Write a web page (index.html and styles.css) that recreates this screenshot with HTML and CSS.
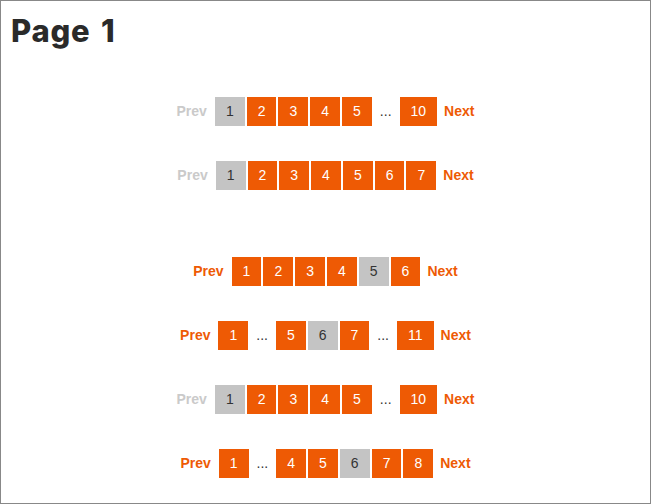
FILE: index.html
```html
<!DOCTYPE html>
<html>
<head>
<meta charset="utf-8">
<link rel="stylesheet" href="styles.css">
</head>
<body>
<div class="page">
  <h1 class="title">Page 1</h1>
  <div class="group group-first">
    <nav class="pager">
      <span class="nav nav-off">Prev</span>
      <span class="box box-cur">1</span>
      <span class="box">2</span>
      <span class="box">3</span>
      <span class="box">4</span>
      <span class="box">5</span>
      <span class="dots">...</span>
      <span class="box">10</span>
      <span class="nav">Next</span>
    </nav>
    <nav class="pager">
      <span class="nav nav-off">Prev</span>
      <span class="box box-cur">1</span>
      <span class="box">2</span>
      <span class="box">3</span>
      <span class="box">4</span>
      <span class="box">5</span>
      <span class="box">6</span>
      <span class="box">7</span>
      <span class="nav">Next</span>
    </nav>
  </div>
  <div class="group group-second">
    <nav class="pager">
      <span class="nav">Prev</span>
      <span class="box">1</span>
      <span class="box">2</span>
      <span class="box">3</span>
      <span class="box">4</span>
      <span class="box box-cur">5</span>
      <span class="box">6</span>
      <span class="nav">Next</span>
    </nav>
    <nav class="pager">
      <span class="nav">Prev</span>
      <span class="box">1</span>
      <span class="dots">...</span>
      <span class="box">5</span>
      <span class="box box-cur">6</span>
      <span class="box">7</span>
      <span class="dots">...</span>
      <span class="box">11</span>
      <span class="nav">Next</span>
    </nav>
    <nav class="pager">
      <span class="nav nav-off">Prev</span>
      <span class="box box-cur">1</span>
      <span class="box">2</span>
      <span class="box">3</span>
      <span class="box">4</span>
      <span class="box">5</span>
      <span class="dots">...</span>
      <span class="box">10</span>
      <span class="nav">Next</span>
    </nav>
    <nav class="pager">
      <span class="nav">Prev</span>
      <span class="box">1</span>
      <span class="dots">...</span>
      <span class="box">4</span>
      <span class="box">5</span>
      <span class="box box-cur">6</span>
      <span class="box">7</span>
      <span class="box">8</span>
      <span class="nav">Next</span>
    </nav>
  </div>
</div>
</body>
</html>
```

FILE: styles.css
```css
* { box-sizing: border-box; }
html, body { margin: 0; padding: 0; background: #fff; }
.page {
  width: 651px;
  height: 504px;
  border: 1px solid #888;
  font-family: "Liberation Sans", Arial, sans-serif;
  font-size: 14px;
}
.title {
  margin: 0;
  padding: 10px 0 0 10px;
  height: 50px;
  font-family: Inter, "DejaVu Sans", sans-serif;
  font-weight: 800;
  font-size: 31px;
  line-height: 40px;
  letter-spacing: 0.8px;
  word-spacing: 3px;
  color: #2a2a2a;
}
.group {
  display: flex;
  flex-direction: column;
  gap: 35px;
}
.group-first { margin-top: 46px; }
.group-second { margin-top: 67px; }
.pager {
  display: flex;
  justify-content: center;
  align-items: center;
  gap: 2px;
  height: 29px;
}
.box {
  height: 29px;
  line-height: 29px;
  padding: 0 11px;
  background: #ee5a04;
  color: #fff;
  text-align: center;
}
.box-cur {
  background: #c4c4c4;
  color: #333;
}
.dots {
  margin: 0 6px;
  color: #333;
  line-height: 29px;
}
.nav {
  font-weight: bold;
  color: #ee5a04;
  line-height: 29px;
}
.nav:first-child { margin-right: 6px; }
.nav:last-child { margin-left: 5px; }
.nav-off { color: #cacaca; }
```
